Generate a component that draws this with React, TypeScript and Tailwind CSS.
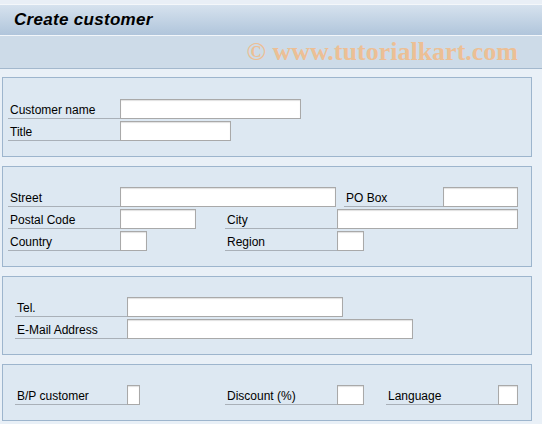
import React from "react";

type FieldProps = {
  label: string;
  labelW: number;
  inputW: number;
};

const Field: React.FC<FieldProps> = ({ label, labelW, inputW }) => (
  <div className="flex h-[20px]">
    <div
      className="flex items-end border-b border-[#a9b0b8] pl-[2px] pb-[1px] leading-[14px] whitespace-nowrap"
      style={{ width: labelW }}
    >
      {label}
    </div>
    <div
      className="h-[20px] bg-white border border-[#a9a9a9] shadow-[inset_0_1px_1px_#e0e0e0]"
      style={{ width: inputW }}
    />
  </div>
);

const Panel: React.FC<{ children: React.ReactNode; className?: string }> = ({ children, className }) => (
  <div className={`mx-[2px] w-[530px] border border-[#9db5cd] bg-[#dde8f2] pt-[20px] pb-[15px] flex flex-col gap-[2px] ${className ?? ""}`}>
    {children}
  </div>
);

export default function App() {
  return (
    <div
      className="w-[542px] h-[424px] overflow-hidden bg-[#e9f0f7] text-[12px] text-black"
      style={{ fontFamily: '"Liberation Sans", Arial, sans-serif' }}
    >
      <div className="h-[4px] bg-[#e9eff6]" />
      <div className="h-[1px] bg-[#f4f7fa]" />
      <div className="h-[30px] bg-gradient-to-b from-[#d6e2ee] to-[#b0c5db] flex items-center pl-[14px]">
        <span className="text-[17px] font-bold italic text-black tracking-[0.3px]">Create customer</span>
      </div>
      <div className="h-[1px] bg-[#f2f6fa]" />
      <div className="h-[33px] bg-[#cddbe8] border-b border-[#a3b8cd] flex items-center justify-end pr-[24px]">
        <span
          className="text-[26px] font-bold text-[#ecbf95] leading-none"
          style={{ fontFamily: '"Liberation Serif", "Times New Roman", serif' }}
        >
          © www.tutorialkart.com
        </span>
      </div>

      <div className="pt-[8px] flex flex-col gap-[9px]">
        <Panel className="pt-[21px]">
          <div className="pl-[5px] flex flex-col gap-[2px]">
            <Field label="Customer name" labelW={112} inputW={181} />
            <Field label="Title" labelW={112} inputW={111} />
          </div>
        </Panel>

        <Panel>
          <div className="pl-[5px] flex flex-col gap-[2px]">
            <div className="flex">
              <Field label="Street" labelW={112} inputW={216} />
              <div className="w-[8px]" />
              <Field label="PO Box" labelW={99} inputW={75} />
            </div>
            <div className="flex gap-[29px]">
              <Field label="Postal Code" labelW={112} inputW={76} />
              <Field label="City" labelW={112} inputW={181} />
            </div>
            <div className="flex gap-[78px]">
              <Field label="Country" labelW={112} inputW={27} />
              <Field label="Region" labelW={112} inputW={27} />
            </div>
          </div>
        </Panel>

        <Panel>
          <div className="pl-[12px] flex flex-col gap-[2px]">
            <Field label="Tel." labelW={112} inputW={216} />
            <Field label="E-Mail Address" labelW={112} inputW={286} />
          </div>
        </Panel>

        <Panel>
          <div className="pl-[12px] flex">
            <Field label="B/P customer" labelW={112} inputW={13} />
            <div className="w-[85px]" />
            <Field label="Discount (%)" labelW={112} inputW={27} />
            <div className="w-[22px]" />
            <Field label="Language" labelW={112} inputW={20} />
          </div>
        </Panel>
      </div>
    </div>
  );
}
